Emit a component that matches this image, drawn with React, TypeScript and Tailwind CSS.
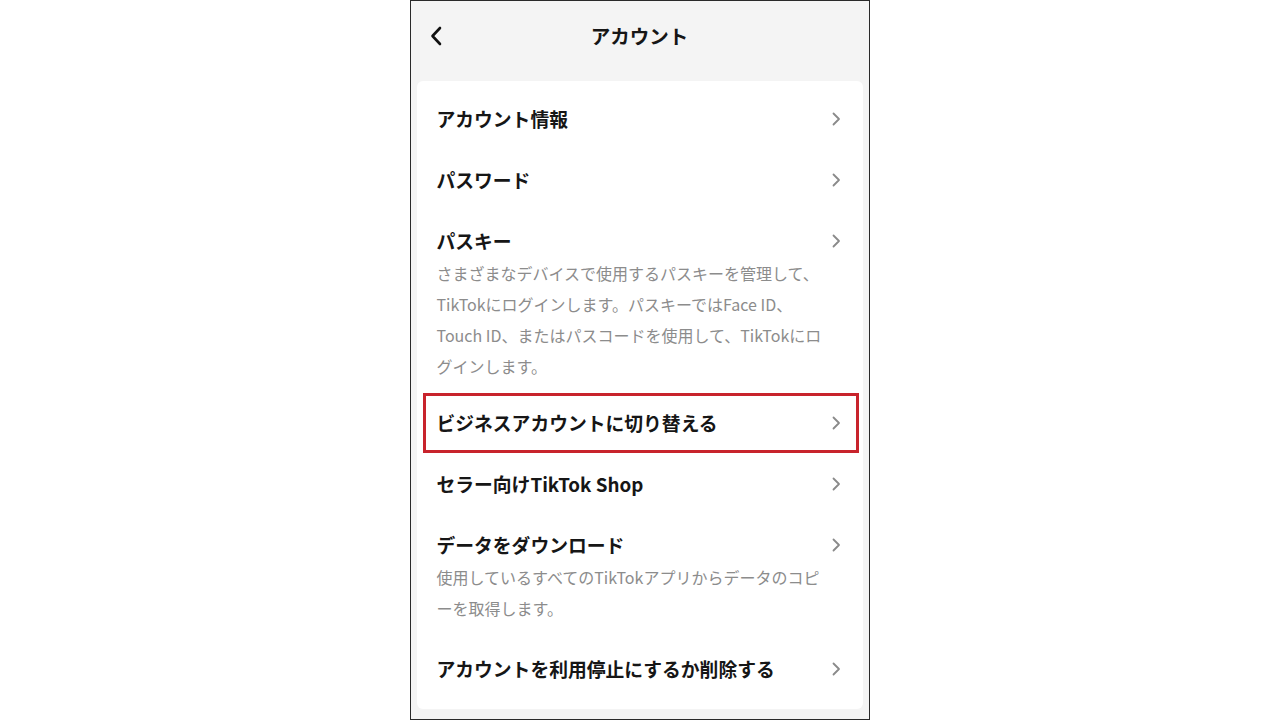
import React from "react";

type Item = {
  title: string;
  desc?: string[];
  highlight?: boolean;
  pb?: string;
};

const ITEMS: Item[] = [
  { title: "アカウント情報" },
  { title: "パスワード" },
  {
    title: "パスキー",
    desc: [
      "さまざまなデバイスで使用するパスキーを管理して、",
      "TikTokにログインします。パスキーではFace ID、",
      "Touch ID、またはパスコードを使用して、TikTokにロ",
      "グインします。",
    ],
    pb: "pb-[11px]",
  },
  { title: "ビジネスアカウントに切り替える", highlight: true },
  { title: "セラー向けTikTok Shop" },
  {
    title: "データをダウンロード",
    desc: ["使用しているすべてのTikTokアプリからデータのコピ", "ーを取得します。"],
    pb: "pb-[14px]",
  },
  { title: "アカウントを利用停止にするか削除する" },
];

const Chevron = () => (
  <svg width="12" height="16" viewBox="0 0 12 16" fill="none" className="shrink-0">
    <path d="M3.5 2.5 L9 8 L3.5 13.5" stroke="#8a8a8a" strokeWidth="1.8" strokeLinecap="round" strokeLinejoin="round" />
  </svg>
);

const Row: React.FC<{ item: Item }> = ({ item }) => (
  <div className={`relative px-[20px] pt-[15.5px] ${item.desc ? item.pb : "pb-[15.5px]"}`}>
    <div className="flex items-center justify-between h-[30px]">
      <span className="text-[18.8px] font-semibold text-[#161616] leading-[30px]">{item.title}</span>
      <span className="mr-[1px]">
        <Chevron />
      </span>
    </div>
    {item.desc && (
      <div className="mt-[2px] text-[16px] leading-[31px] text-[#8c8c8c] pr-[20px]">
        {item.desc.map((line, i) => (
          <div key={i} className="whitespace-nowrap">
            {line}
          </div>
        ))}
      </div>
    )}
    {item.highlight && (
      <div className="absolute left-[6px] right-[4px] top-0 bottom-[1px] border-[3px] border-[#c8232c] pointer-events-none" />
    )}
  </div>
);

export default function App() {
  return (
    <div
      className="w-[1280px] h-[720px] bg-white flex justify-center"
      style={{ fontFamily: '"Noto Sans CJK JP", "Noto Sans", sans-serif' }}
    >
      <div className="ml-[-1px] w-[460px] h-[720px] border-x-[1.5px] border-y-[1.5px] border-[#2a2a2a] bg-[#f4f4f4] flex flex-col overflow-hidden">
        <div className="relative h-[80px] shrink-0 flex items-center justify-center pb-[11px]">
          <svg
            width="16"
            height="22"
            viewBox="0 0 16 22"
            fill="none"
            className="absolute left-[17px] top-[24px]"
          >
            <path d="M12 3 L4.5 11 L12 19" stroke="#111" strokeWidth="2.6" strokeLinecap="round" strokeLinejoin="round" />
          </svg>
          <h1 className="text-[19.5px] font-bold text-[#161616]">アカウント</h1>
        </div>
        <div className="mx-[6px] bg-white rounded-[6px] pt-[7px] pb-[10px]">
          {ITEMS.map((item) => (
            <Row key={item.title} item={item} />
          ))}
        </div>
      </div>
    </div>
  );
}
